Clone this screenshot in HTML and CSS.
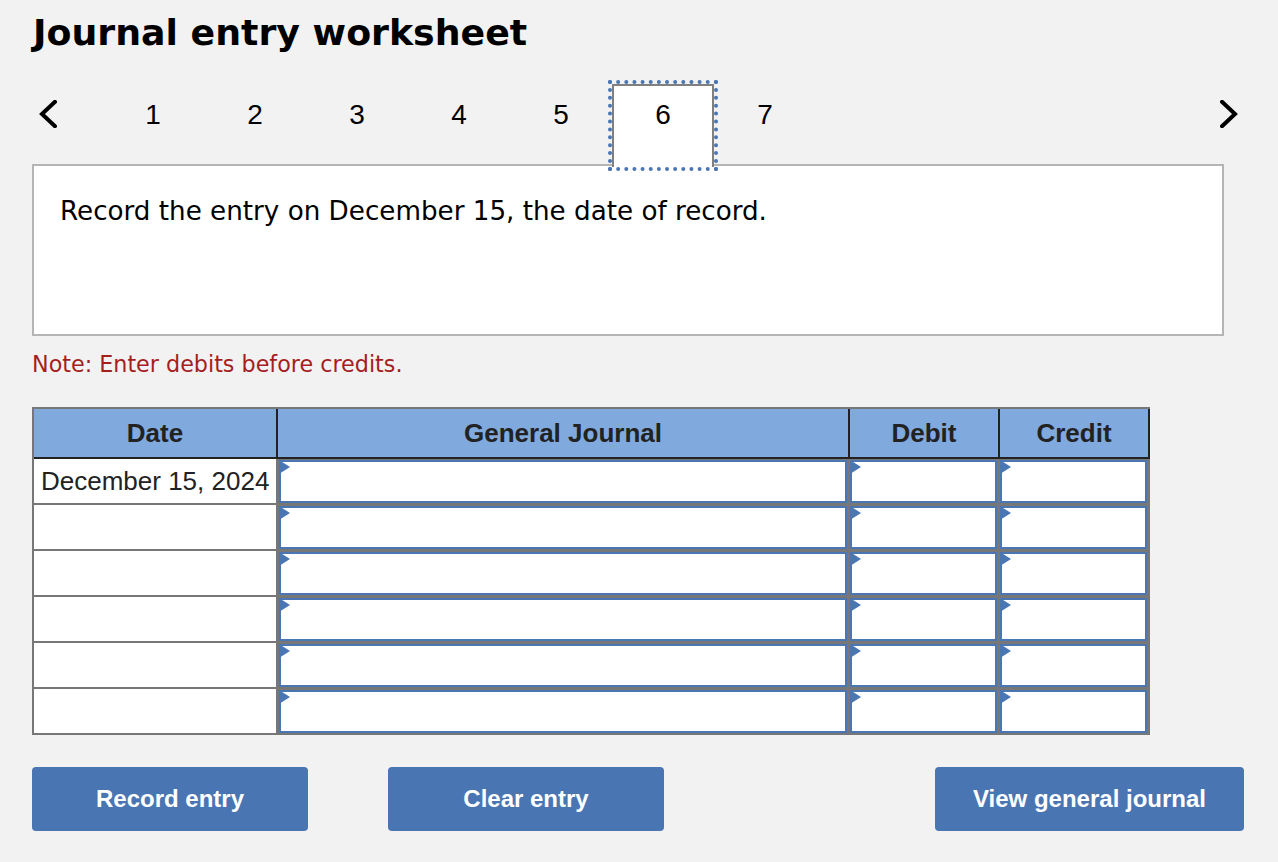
FILE: index.html
```html
<!DOCTYPE html>
<html lang="en">
<head>
<meta charset="utf-8">
<title>Journal entry worksheet</title>
<link rel="stylesheet" href="styles.css">
</head>
<body>
<main class="page">
  <h1 class="title">Journal entry worksheet</h1>
  <nav class="steps">
    <button class="arrow arrow-prev" aria-label="Previous">
      <svg width="18" height="28" viewBox="0 0 18 28"><path d="M16 1.8 L3 14 L16 26.2" fill="none" stroke="#000" stroke-width="4" stroke-linecap="round" stroke-linejoin="miter"/></svg>
    </button>
    <ol class="tabs">
      <li class="tab">1</li>
      <li class="tab">2</li>
      <li class="tab">3</li>
      <li class="tab">4</li>
      <li class="tab">5</li>
      <li class="tab tab-active">6</li>
      <li class="tab">7</li>
    </ol>
    <button class="arrow arrow-next" aria-label="Next">
      <svg width="18" height="28" viewBox="0 0 18 28"><path d="M2 1.8 L15 14 L2 26.2" fill="none" stroke="#000" stroke-width="4" stroke-linecap="round" stroke-linejoin="miter"/></svg>
    </button>
  </nav>
  <section class="prompt">Record the entry on December 15, the date of record.</section>
  <p class="note">Note: Enter debits before credits.</p>
  <table class="journal">
    <colgroup>
      <col class="col-date"><col class="col-journal"><col class="col-amount"><col class="col-amount">
    </colgroup>
    <thead>
      <tr><th>Date</th><th>General Journal</th><th>Debit</th><th>Credit</th></tr>
    </thead>
    <tbody>
      <tr><td class="date">December 15, 2024</td><td class="entry entry-wide"><input></td><td class="entry"><input></td><td class="entry"><input></td></tr>
      <tr><td class="date"></td><td class="entry entry-wide"><input></td><td class="entry"><input></td><td class="entry"><input></td></tr>
      <tr><td class="date"></td><td class="entry entry-wide"><input></td><td class="entry"><input></td><td class="entry"><input></td></tr>
      <tr><td class="date"></td><td class="entry entry-wide"><input></td><td class="entry"><input></td><td class="entry"><input></td></tr>
      <tr><td class="date"></td><td class="entry entry-wide"><input></td><td class="entry"><input></td><td class="entry"><input></td></tr>
      <tr><td class="date"></td><td class="entry entry-wide"><input></td><td class="entry"><input></td><td class="entry"><input></td></tr>
    </tbody>
  </table>
  <div class="actions">
    <button class="btn">Record entry</button>
    <button class="btn">Clear entry</button>
    <button class="btn btn-view">View general journal</button>
  </div>
</main>
</body>
</html>
```
FILE: styles.css
```css
* { box-sizing: border-box; }
html, body { margin: 0; padding: 0; }
body {
  background: #f2f2f2;
  color: #000;
  font-family: "Liberation Sans", Arial, sans-serif;
  height: 862px;
  overflow: hidden;
}
.page { padding: 0 34px 0 32px; }
.title {
  margin: 0;
  padding: 10px 0 0 1px;
  height: 84px;
  font-family: "DejaVu Sans", Verdana, sans-serif;
  font-weight: 700;
  font-size: 36.3px;
  line-height: 46px;
}
.steps {
  display: flex;
  align-items: flex-start;
  justify-content: space-between;
  height: 83px;
  position: relative;
  z-index: 1;
}
.arrow {
  background: none;
  border: 0;
  padding: 0;
  margin: 16px 0 0;
  line-height: 0;
}
.arrow-prev { margin-left: 7px; margin-right: 45px; }
.arrow-next { margin-right: 6px; }
.tabs {
  display: flex;
  flex: 1;
  list-style: none;
  margin: 0;
  padding: 0;
}
.tab {
  width: 102px;
  height: 83px;
  padding-top: 15px;
  text-align: center;
  font-size: 28px;
  line-height: 32px;
}
.tab-active {
  background: #fff;
  border: 2px solid #808080;
  border-bottom: 0;
  padding-top: 13px;
  outline: 4px dotted #4a76b4;
  outline-offset: 0;
}
.prompt {
  margin-top: -3px;
  margin-right: 20px;
  height: 172px;
  background: #fff;
  border: 2px solid #b5b5b5;
  padding: 27px 26px;
  font-family: "DejaVu Sans", Verdana, sans-serif;
  font-size: 26.2px;
  line-height: 36px;
}
.note {
  margin: 0;
  padding-top: 13px;
  height: 71px;
  color: #a51e1e;
  font-family: "DejaVu Sans", Verdana, sans-serif;
  font-size: 22.25px;
  line-height: 30px;
}
.journal {
  border-collapse: separate;
  border-spacing: 0;
  table-layout: fixed;
  width: 1118px;
  background: #fff;
  border-top: 2px solid #777;
  border-left: 2px solid #777;
  color: #222;
  font-size: 26px;
}
.col-date { width: 244px; }
.col-journal { width: 572px; }
.col-amount { width: 150px; }
.journal th {
  height: 50px;
  padding: 0;
  background: #80a9de;
  border-right: 2px solid #222;
  border-bottom: 2px solid #222;
  font-weight: 700;
  text-align: center;
}
.journal td {
  height: 46px;
  padding: 0;
  border-right: 2px solid #777;
  border-bottom: 2px solid #777;
}
.journal .date {
  padding-left: 7px;
  white-space: nowrap;
}
.journal .entry {
  position: relative;
  padding: 1px 1px 0 0;
  vertical-align: top;
  background: #777;
}
.journal .entry-wide { padding-left: 1px; }
.entry::before {
  content: "";
  position: absolute;
  left: 0;
  top: 1px;
  border-left: 11px solid #4a76b4;
  border-top: 7px solid transparent;
  border-bottom: 7px solid transparent;
}
.entry-wide::before { left: 1px; }
.entry input {
  display: block;
  width: 100%;
  height: 43px;
  margin: 0;
  padding: 0;
  background: #fff;
  border: 2px solid #4a76b4;
  border-radius: 0;
  outline: 0;
}
.actions {
  display: flex;
  gap: 80px;
  margin-top: 32px;
}
.btn {
  width: 276px;
  height: 64px;
  padding: 0;
  background: #4a75b3;
  border: 0;
  border-radius: 4px;
  color: #fff;
  font-family: "Liberation Sans", Arial, sans-serif;
  font-weight: 700;
  font-size: 24px;
}
.btn-view {
  width: 309px;
  margin-left: auto;
}
```
